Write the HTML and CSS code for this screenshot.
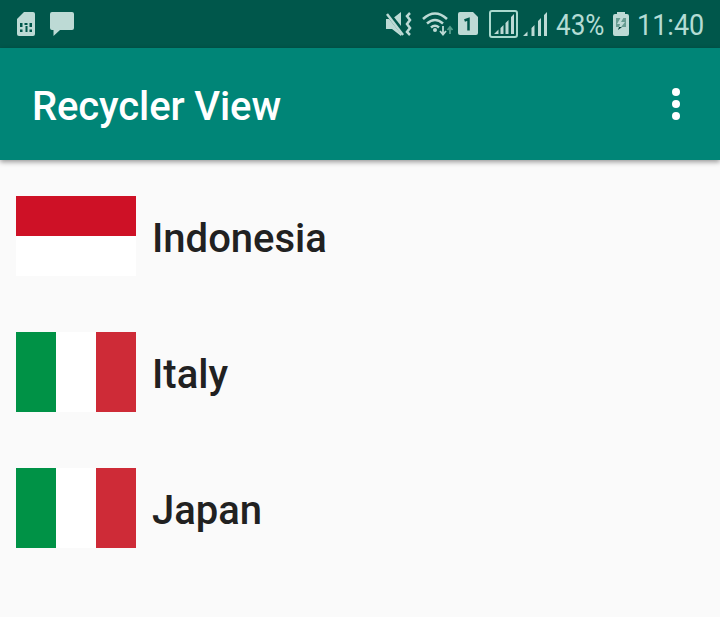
FILE: index.html
```html
<!DOCTYPE html>
<html lang="en">
<head>
<meta charset="utf-8">
<title>Recycler View</title>
<link rel="stylesheet" href="styles.css">
</head>
<body>
<div class="status">
  <svg class="status-icons" width="90" height="48" viewBox="0 0 90 48">
    <path class="fill" d="M24 12h9q2 0 2 2v20q0 2-2 2H19q-2 0-2-2V19z"/>
    <path class="cut" d="M20 23h2.500v4H20zM24.500 23h3v2h-3zM29.500 23H32v4h-2.500zM20 29.500h2.500V32H20zM25.500 26h2v6h-2zM29.500 29.500H32V32h-2.500z"/>
    <path class="fill" d="M52 12h20q2 0 2 2v14q0 2-2 2H60l-6.500 6v-6H52q-2 0-2-2V14q0-2 2-2z"/>
  </svg>
  <svg class="status-icons" width="172" height="48" viewBox="380 0 172 48">
    <path class="fill" d="M386 19h6l9-7v24l-9-7h-6z"/>
    <path class="slash-gap" d="M386 11l19 24"/>
    <path class="line" d="M387 14l16 21"/>
    <path class="line" d="M410 13l-3 3 3 4-3 4 3 4-3 4 3 3"/>
    <path class="line" d="M423 19q12-11 24 0M427 23.500q8-7 16 0M431 27.500q4-3.500 8 0"/>
    <circle class="fill" cx="435" cy="30" r="2"/>
    <path class="arrow" d="M443 26v8m-3-3 3 3.500 3-3.500"/>
    <path class="arrow dim" d="M450 34v-7m-2.500 3 2.500-3 2.500 3"/>
    <path class="fill" d="M460 12h13l5 5v16q0 2-2 2h-16q-2 0-2-2V14q0-2 2-2z"/>
    <path class="digit" d="M464.500 20.500l4-1.500v11.500"/>
    <rect class="frame" x="490" y="11" width="27" height="26" rx="2"/>
    <path class="fill" d="M494 34l4.500-4.500V34zM500.500 34v-6l3-3v9zM505.500 34V23l3-3v14zM511 34V17l3-3v20z"/>
    <path class="fill" d="M523 36l4.500-4.500V36zM531.500 36v-8l3-3v11zM538 36V21l3-3v18zM544 36V15l3-3v24z"/>
  </svg>
  <span class="battery-text"><span class="condensed">43%</span></span>
  <svg class="status-icons" width="24" height="48" viewBox="610 0 24 48">
    <path class="fill" d="M617 12h8v2h2q2 0 2 2v18q0 2-2 2h-12q-2 0-2-2V16q0-2 2-2h2z"/>
    <path class="charge" d="M616 18h10v9h-10z"/>
    <path class="fill" d="M621 17l-4 7h3l-2 7 7-9h-4l3-5z"/>
    <path class="bolt" d="M618 30l1-3h3z"/>
  </svg>
  <span class="clock"><span class="condensed">11:40</span></span>
</div>
<header class="toolbar">
  <h1>Recycler View</h1>
  <div class="overflow"><i></i><i></i><i></i></div>
</header>
<main class="list">
  <div class="row"><div class="flag indonesia"></div><span class="name">Indonesia</span></div>
  <div class="row"><div class="flag italy"></div><span class="name">Italy</span></div>
  <div class="row"><div class="flag italy"></div><span class="name">Japan</span></div>
</main>
</body>
</html>
```
FILE: styles.css
```css
* { box-sizing: border-box; }
body {
  margin: 0;
  height: 617px;
  overflow: hidden;
  background: #fafafa;
  font-family: Roboto, sans-serif;
}
.status {
  display: flex;
  align-items: center;
  height: 48px;
  background: #00574b;
  color: #b4dcd4;
}
.status-icons { display: block; flex: none; }
.status-icons + .status-icons { margin-left: 290px; }
.fill { fill: #bddad5; }
.cut { fill: #00574b; }
.line { fill: none; stroke: #bddad5; stroke-width: 2.5; }
.slash-gap { fill: none; stroke: #00574b; stroke-width: 5; }
.arrow { fill: none; stroke: #bddad5; stroke-width: 1.8; }
.dim { stroke: #559e8d; }
.digit { fill: none; stroke: #00574b; stroke-width: 2.5; }
.frame { fill: none; stroke: #a9d9ce; stroke-width: 2; }
.charge { fill: #679c91; }
.bolt { fill: #003d34; }
.battery-text, .clock {
  height: 48px;
  font-size: 30px;
  line-height: 50px;
  white-space: nowrap;
}
.battery-text { width: 54px; margin-left: 4px; }
.clock { width: 70px; margin-left: 3px; }
.condensed {
  display: inline-block;
  transform: scaleX(.87);
  transform-origin: left center;
}
.clock .condensed { transform: scaleX(.9); }
.toolbar {
  display: flex;
  align-items: center;
  justify-content: space-between;
  height: 112px;
  padding: 0 40px 0 32px;
  background: #008577;
  box-shadow: 0 2px 5px rgba(0, 0, 0, .4);
}
h1 {
  margin: 6px 0 0;
  color: #fff;
  font-size: 40px;
  line-height: 48px;
  font-weight: 500;
  letter-spacing: -.12px;
}
.overflow { display: grid; gap: 4px; }
.overflow i {
  width: 8px;
  height: 8px;
  border-radius: 50%;
  background: #fff;
}
.list {
  display: flex;
  flex-direction: column;
  gap: 56px;
  padding: 36px 16px;
}
.row { display: flex; align-items: center; gap: 16px; height: 80px; }
.flag { width: 120px; height: 80px; }
.indonesia { background: linear-gradient(#ce1126 50%, #fff 50%); }
.italy { background: linear-gradient(90deg, #009246 33.333%, #fff 33.333% 66.667%, #ce2b37 66.667%); }
.name {
  color: #212121;
  font-size: 40px;
  line-height: 48px;
  font-weight: 500;
  margin-top: 6px;
}
```
